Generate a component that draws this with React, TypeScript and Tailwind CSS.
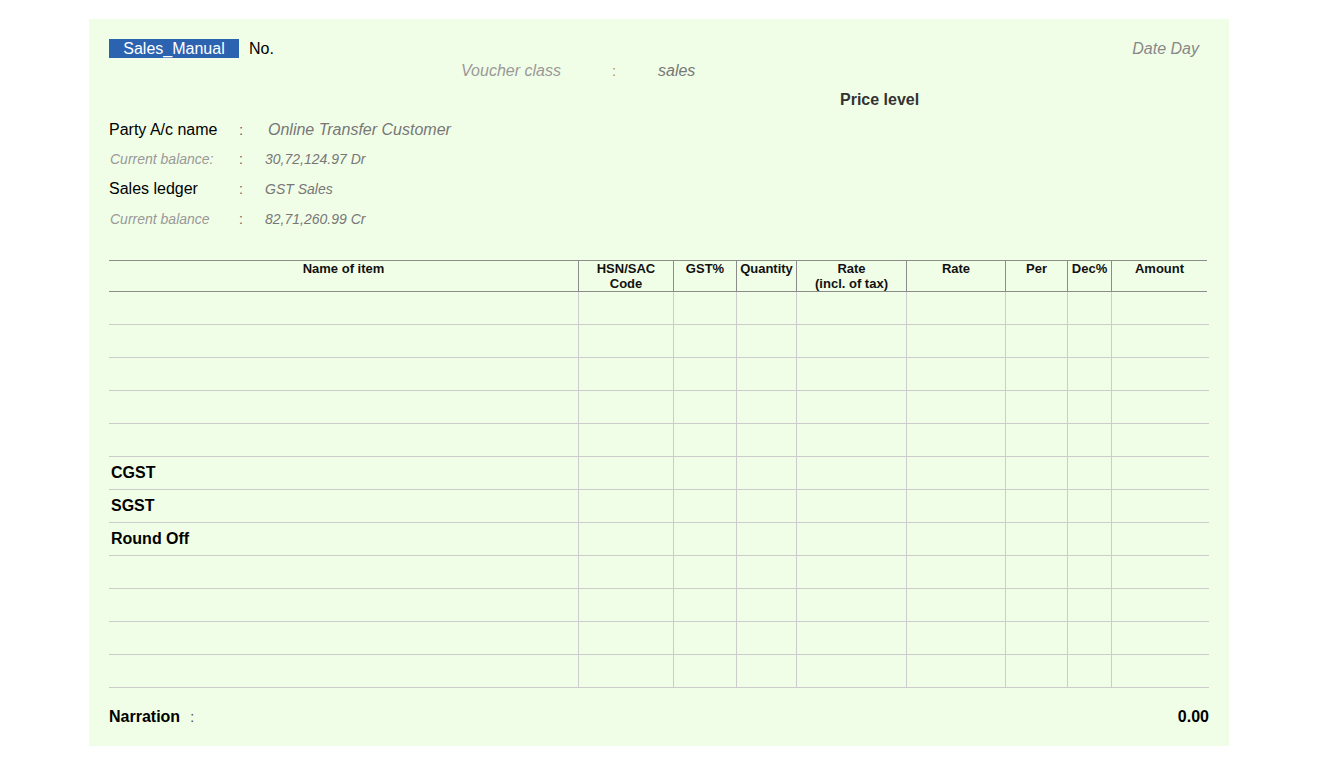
const cols = [
  { label: ["Name of item"], w: "w-[469px]" },
  { label: ["HSN/SAC", "Code"], w: "w-[95px]" },
  { label: ["GST%"], w: "w-[63px]" },
  { label: ["Quantity"], w: "w-[60px]" },
  { label: ["Rate", "(incl. of tax)"], w: "w-[110px]" },
  { label: ["Rate"], w: "w-[99px]" },
  { label: ["Per"], w: "w-[62px]" },
  { label: ["Dec%"], w: "w-[44px]" },
  { label: ["Amount"], w: "w-[96px]" },
];

const bodyWidths = [
  "w-[469px]",
  "w-[95px]",
  "w-[63px]",
  "w-[60px]",
  "w-[110px]",
  "w-[99px]",
  "w-[62px]",
  "w-[44px]",
  "w-[98px]",
];

const rows = ["", "", "", "", "", "CGST", "SGST", "Round Off", "", "", "", ""];

const App = () => {
  return (
    <div className="min-h-screen bg-white pt-[19px] font-['Liberation_Sans',Arial,sans-serif]">
      <div className="mx-auto w-[1140px] bg-[#f1fee7] px-[20px] pt-[20px]">
        {/* Top line */}
        <div className="flex h-[19px] items-center">
          <div className="flex h-[19px] w-[130px] items-center justify-center bg-[#2b63b1] text-[16px] leading-none text-white">
            Sales_Manual
          </div>
          <span className="ml-[10px] text-[16px] leading-none text-black">No.</span>
          <span className="ml-auto mr-[10px] text-[16px] italic leading-none text-[#888]">Date Day</span>
        </div>

        {/* Voucher class */}
        <div className="flex h-[26px] items-center pl-[352px]">
          <span className="w-[151px] text-[16px] italic text-[#999]">Voucher class</span>
          <span className="w-[46px] text-[15px] text-[#d08a1c]">:</span>
          <span className="text-[16px] italic text-[#777]">sales</span>
        </div>

        {/* Price level */}
        <div className="flex h-[32px] items-center pl-[731px]">
          <span className="text-[16px] font-bold text-[#333]">Price level</span>
        </div>

        {/* Party details */}
        <div className="flex h-[28px] items-center">
          <span className="w-[130px] text-[16px] text-black">Party A/c name</span>
          <span className="w-[29px] text-[15px] text-[#666]">:</span>
          <span className="text-[16px] italic text-[#777]">Online Transfer Customer</span>
        </div>
        <div className="flex h-[30px] items-center">
          <span className="w-[130px] pl-px text-[14px] italic text-[#999]">Current balance:</span>
          <span className="w-[26px] text-[14px] text-[#666]">:</span>
          <span className="text-[14px] italic text-[#777]">30,72,124.97 Dr</span>
        </div>
        <div className="flex h-[30px] items-center">
          <span className="w-[130px] text-[16px] text-black">Sales ledger</span>
          <span className="w-[26px] text-[14px] text-[#666]">:</span>
          <span className="text-[14px] italic text-[#777]">GST Sales</span>
        </div>
        <div className="flex h-[30px] items-center">
          <span className="w-[130px] pl-px text-[14px] italic text-[#999]">Current balance</span>
          <span className="w-[26px] text-[14px] text-[#666]">:</span>
          <span className="text-[14px] italic text-[#777]">82,71,260.99 Cr</span>
        </div>

        {/* Items table */}
        <div className="mt-[26px]">
          <div className="flex h-[32px] w-[1098px] border-y border-[#8c8c8c]">
            {cols.map((c, i) => (
              <div
                key={i}
                className={`${c.w} ${i > 0 ? "border-l border-[#8c8c8c]" : ""} text-center text-[13px] font-bold leading-[15px] text-[#111]`}
              >
                {c.label.map((l, j) => (
                  <div key={j}>{l}</div>
                ))}
              </div>
            ))}
          </div>
          {rows.map((r, i) => (
            <div key={i} className="flex h-[33px] border-b border-[#cccccc]">
              {bodyWidths.map((w, j) => (
                <div
                  key={j}
                  className={`${w} ${j > 0 ? "border-l border-[#cccccc]" : ""} flex items-center`}
                >
                  {j === 0 && r && (
                    <span className="pl-[2px] text-[16px] font-bold text-black">{r}</span>
                  )}
                </div>
              ))}
            </div>
          ))}
        </div>

        {/* Narration */}
        <div className="flex h-[58px] items-center">
          <span className="text-[16px] font-bold text-black">Narration</span>
          <span className="ml-[10px] text-[14px] text-[#444]">:</span>
          <span className="ml-auto text-[16px] font-bold text-black">0.00</span>
        </div>
      </div>
    </div>
  );
};

export default App;
